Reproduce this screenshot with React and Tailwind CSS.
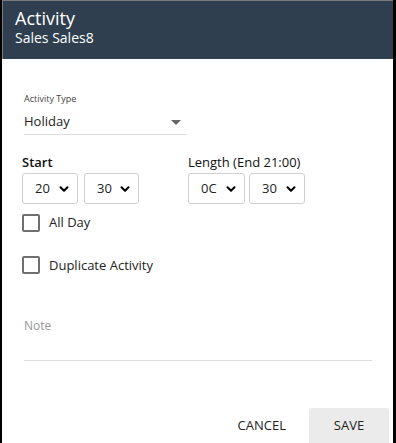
import { ChevronDown } from 'lucide-react'

function TimeSelect({ value, width = 'w-[56px]' }) {
  return (
    <div className={`${width} h-[31px] flex items-center justify-between border border-[#d0d0d0] rounded-[3px] pl-[12px] pr-[6px] text-[13px] text-[#222]`}>
      <span>{value}</span>
      <ChevronDown className="w-[14px] h-[14px] text-black" strokeWidth={3.5} />
    </div>
  )
}

function Check({ label }) {
  return (
    <div className="flex items-center gap-[9px]">
      <div className="w-[18px] h-[18px] border-2 border-[#6f6f6f] rounded-[2px]" />
      <span className="text-[13px] text-[#222]">{label}</span>
    </div>
  )
}

export default function App() {
  return (
    <div className="w-[396px] h-[443px] bg-black flex pl-[2px] pr-[3px] overflow-hidden" style={{ fontFamily: '"Open Sans", sans-serif' }}>
      <div className="flex-1 bg-white flex flex-col">
        <div className="h-[59px] bg-[#2f3f4f] border-t border-l border-[#7a7a7a] px-[12px] pt-[7px] text-white">
          <div className="text-[18px] leading-[21px]">Activity</div>
          <div className="text-[14px] leading-[17px]">Sales Sales8</div>
        </div>

        <div className="px-[20px] pt-[33px] flex-1 flex flex-col">
          <div className="text-[9px] text-[#444] pl-[2px]">Activity Type</div>
          <div className="w-[163px] ml-[2px] mt-[5px] h-[24px] flex items-center justify-between border-b border-[#ddd] pr-[6px]">
            <span className="text-[13px] text-[#222]">Holiday</span>
            <span className="w-0 h-0 border-l-[5px] border-r-[5px] border-t-[5px] border-l-transparent border-r-transparent border-t-[#666]" />
          </div>

          <div className="flex mt-[18px]">
            <div className="w-[166px]">
              <div className="text-[13px] font-semibold text-[#111]">Start</div>
              <div className="flex gap-[6px] mt-[1px]">
                <TimeSelect value="20" />
                <TimeSelect value="30" width="w-[55px]" />
              </div>
            </div>
            <div>
              <div className="text-[13px] text-[#111]">Length (End 21:00)</div>
              <div className="flex gap-[4px] mt-[1px]">
                <TimeSelect value="0C" width="w-[57px]" />
                <TimeSelect value="30" width="w-[56px]" />
              </div>
            </div>
          </div>

          <div className="mt-[9px]">
            <Check label="All Day" />
          </div>
          <div className="mt-[23px]">
            <Check label="Duplicate Activity" />
          </div>

          <div className="mt-[42px] ml-[2px] mr-[1px]">
            <div className="text-[12px] text-[#999]">Note</div>
            <div className="h-[26px] border-b border-[#ddd]" />
          </div>

          <div className="mt-auto flex justify-end items-stretch h-[35px]">
            <div className="flex items-center pr-[23px] text-[13px] text-[#222]">CANCEL</div>
            <div className="w-[80px] bg-[#ebebeb] rounded-t-[2px] flex items-center justify-center text-[13px] text-[#222] -mr-[16px]">SAVE</div>
          </div>
        </div>
      </div>
    </div>
  )
}
